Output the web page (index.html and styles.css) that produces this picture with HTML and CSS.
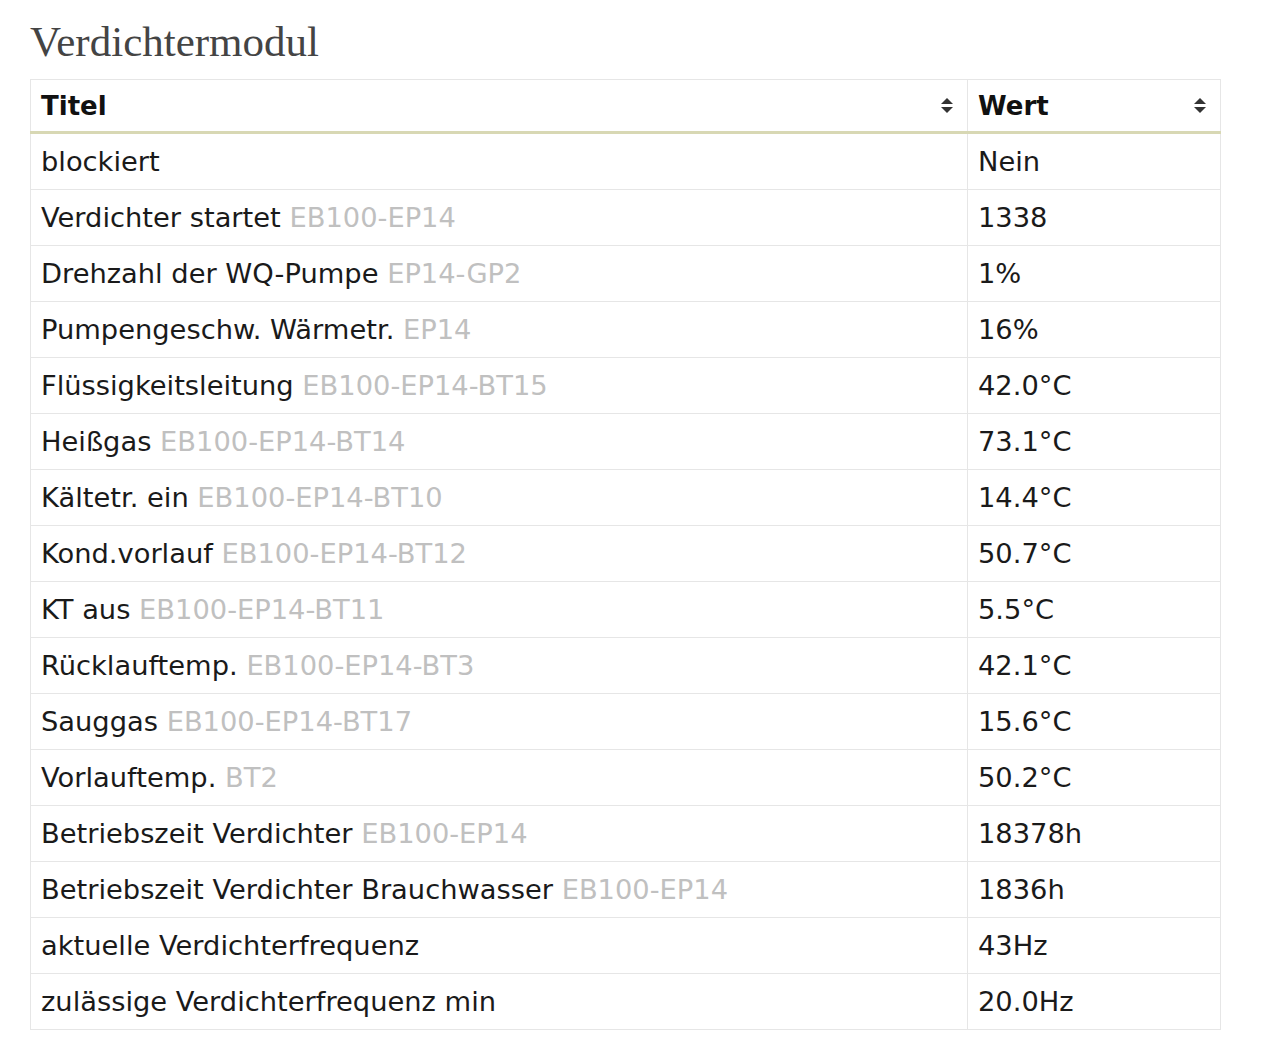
FILE: index.html
```html
<!DOCTYPE html>
<html lang="de">
<head>
<meta charset="utf-8">
<title>Verdichtermodul</title>
<link rel="stylesheet" href="styles.css">
</head>
<body>
<div class="page">
  <h2 class="title">Verdichtermodul</h2>
  <table class="data">
    <thead>
      <tr>
        <th class="col-title"><div class="th-inner"><span>Titel</span><svg class="sort" width="12" height="15" viewBox="0 0 12 15"><path d="M6 0 L12 6 H0 Z" fill="#333"/><path d="M0 9 H12 L6 15 Z" fill="#333"/></svg></div></th>
        <th class="col-value"><div class="th-inner"><span>Wert</span><svg class="sort" width="12" height="15" viewBox="0 0 12 15"><path d="M6 0 L12 6 H0 Z" fill="#333"/><path d="M0 9 H12 L6 15 Z" fill="#333"/></svg></div></th>
      </tr>
    </thead>
    <tbody>
      <tr><td>blockiert</td><td>Nein</td></tr>
      <tr><td>Verdichter startet <span class="code">EB100-EP14</span></td><td>1338</td></tr>
      <tr><td>Drehzahl der WQ-Pumpe <span class="code">EP14-GP2</span></td><td>1%</td></tr>
      <tr><td>Pumpengeschw. Wärmetr. <span class="code">EP14</span></td><td>16%</td></tr>
      <tr><td>Flüssigkeitsleitung <span class="code">EB100-EP14-BT15</span></td><td>42.0°C</td></tr>
      <tr><td>Heißgas <span class="code">EB100-EP14-BT14</span></td><td>73.1°C</td></tr>
      <tr><td>Kältetr. ein <span class="code">EB100-EP14-BT10</span></td><td>14.4°C</td></tr>
      <tr><td>Kond.vorlauf <span class="code">EB100-EP14-BT12</span></td><td>50.7°C</td></tr>
      <tr><td>KT aus <span class="code">EB100-EP14-BT11</span></td><td>5.5°C</td></tr>
      <tr><td>Rücklauftemp. <span class="code">EB100-EP14-BT3</span></td><td>42.1°C</td></tr>
      <tr><td>Sauggas <span class="code">EB100-EP14-BT17</span></td><td>15.6°C</td></tr>
      <tr><td>Vorlauftemp. <span class="code">BT2</span></td><td>50.2°C</td></tr>
      <tr><td>Betriebszeit Verdichter <span class="code">EB100-EP14</span></td><td>18378h</td></tr>
      <tr><td>Betriebszeit Verdichter Brauchwasser <span class="code">EB100-EP14</span></td><td>1836h</td></tr>
      <tr><td>aktuelle Verdichterfrequenz</td><td>43Hz</td></tr>
      <tr><td>zulässige Verdichterfrequenz min</td><td>20.0Hz</td></tr>
    </tbody>
  </table>
</div>
</body>
</html>
```

FILE: styles.css
```css
html, body {
  margin: 0;
  padding: 0;
  background: #ffffff;
}

.page {
  padding: 0 0 0 30px;
}

.title {
  margin: 0;
  padding-top: 18px;
  height: 79px;
  box-sizing: border-box;
  font-family: "Liberation Serif", "Times New Roman", serif;
  font-weight: normal;
  font-size: 43px;
  line-height: 48px;
  color: #444444;
}

.data {
  width: 1191px;
  border-collapse: collapse;
  font-family: "DejaVu Sans", Verdana, sans-serif;
  font-size: 27.3px;
  color: #1a1a1a;
}

.data th,
.data td {
  border: 1px solid #e6e6e6;
  text-align: left;
  padding: 0 10px;
}

.data th {
  height: 51px;
  font-weight: bold;
  font-size: 26px;
  color: #111111;
  border-bottom: 3px solid #d8d8b4;
}

.col-title {
  width: 916px;
}

.th-inner {
  display: flex;
  align-items: center;
  justify-content: space-between;
}

.sort {
  display: block;
  margin-right: 4px;
}

.data td {
  height: 55px;
  line-height: 30px;
}

.code {
  color: #c0c0c0;
}
```
